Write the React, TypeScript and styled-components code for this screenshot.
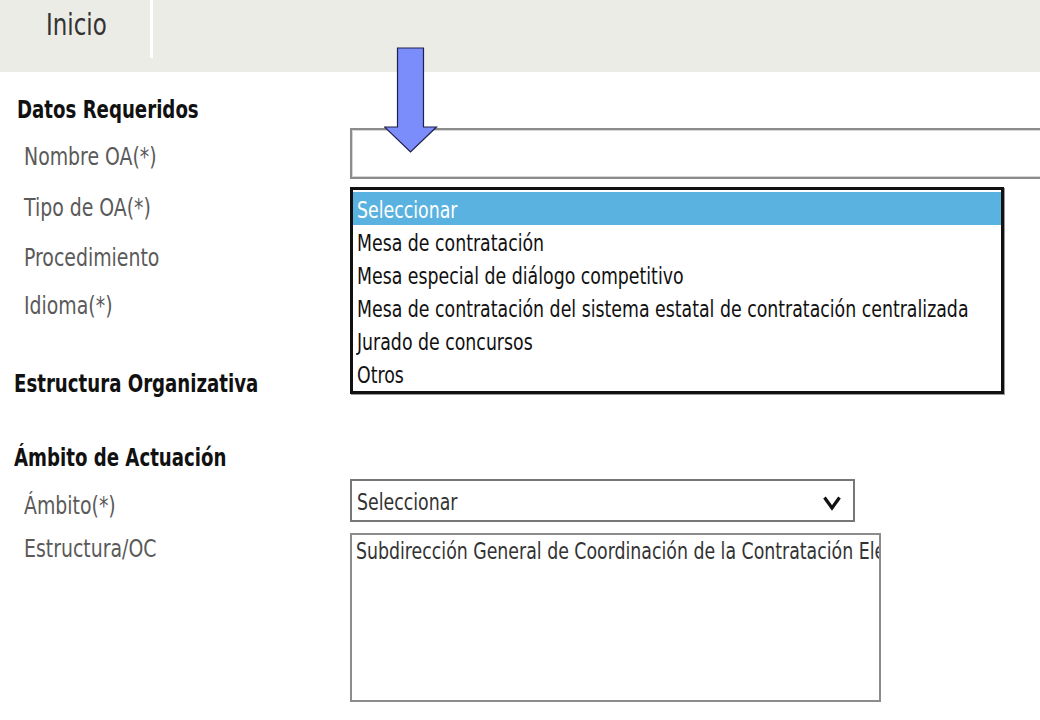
import React from 'react';
import styled, { createGlobalStyle } from 'styled-components';

const Global = createGlobalStyle`
  html, body { margin: 0; padding: 0; background: #fff; }
  body {
    font-family: "DejaVu Sans Condensed", "DejaVu Sans", sans-serif;
    font-stretch: condensed;
    overflow: hidden;
  }
  #root { width: 1040px; height: 720px; }
`;

const Page = styled.div`
  position: relative;
  width: 1040px;
  height: 720px;
  overflow: hidden;
  background: #fff;
`;

const TopBar = styled.nav`
  height: 72px;
  background: #ecece6;
  display: flex;
  align-items: flex-start;
`;

const Tab = styled.div`
  width: 104px;
  padding-left: 46px;
  border-right: 3px solid #ffffff;
  display: flex;
  align-items: center;
  padding-bottom: 10px;
  box-sizing: content-box;
  height: 48px;
`;

const TabLabel = styled.span`
  display: inline-block;
  font-size: 25.5px;
  line-height: 30px;
  color: #333;
  transform: scaleY(1.2);
`;

const Content = styled.main`
  padding-top: 23px;
  display: flex;
  flex-direction: column;
`;

const SectionTitle = styled.h2<{ $indent: number; $gap?: number }>`
  margin: ${(p) => p.$gap ?? 0}px 0 0 0;
  padding-left: ${(p) => p.$indent}px;
  height: 30px;
  line-height: 30px;
  font-size: 20.2px;
  font-weight: bold;
  color: #111;
  white-space: nowrap;
  transform: scaleY(1.2);
`;

const Row = styled.div<{ $h: number; $align?: string; $gap?: number }>`
  display: grid;
  grid-template-columns: 350px 1fr;
  height: ${(p) => p.$h}px;
  margin-top: ${(p) => p.$gap ?? 0}px;
  align-items: ${(p) => p.$align ?? 'center'};
`;

const Label = styled.label<{ $top?: number }>`
  display: block;
  padding-left: 24px;
  padding-top: ${(p) => p.$top ?? 0}px;
  font-size: 21px;
  line-height: 26px;
  color: #5a5a5a;
  white-space: nowrap;
  transform: scaleY(1.2);
`;

const Field = styled.div`
  position: relative;
  align-self: stretch;
  display: flex;
  align-items: center;
`;

const TextInput = styled.div`
  width: 720px;
  height: 51px;
  box-sizing: border-box;
  border: 2px solid #8c8c8c;
  box-shadow: inset 0 0 0 1px #d6d6d6;
  background: #fff;
`;

const ListBox = styled.ul`
  position: absolute;
  left: 0;
  top: 5px;
  width: 654px;
  box-sizing: border-box;
  margin: 0;
  padding: 2px 0 1px;
  list-style: none;
  border: 3px solid #111;
  background: #fff;
  box-shadow: 1px 1px 0 #999;
  z-index: 2;
`;

const Option = styled.li<{ $selected?: boolean }>`
  height: 33px;
  box-sizing: border-box;
  display: flex;
  align-items: center;
  padding: 4px 0 0 4px;
  background: ${(p) => (p.$selected ? '#59b2e0' : 'transparent')};
  color: ${(p) => (p.$selected ? '#ffffff' : '#111')};
`;

const OptionText = styled.span`
  display: inline-block;
  font-size: 19.3px;
  line-height: 24px;
  white-space: nowrap;
  transform: scaleY(1.22);
`;

const Select = styled.div`
  width: 505px;
  height: 43px;
  box-sizing: border-box;
  border: 2px solid #777;
  background: #fff;
  display: flex;
  align-items: center;
  justify-content: space-between;
  padding: 4px 11px 0 5px;
`;

const SelectText = styled.span`
  display: inline-block;
  font-size: 19.3px;
  line-height: 24px;
  color: #333;
  transform: scaleY(1.22);
`;

const TextArea = styled.div`
  width: 531px;
  height: 169px;
  box-sizing: border-box;
  border: 2px solid #8c8c8c;
  background: #fff;
  padding: 5px 4px;
  overflow: hidden;
`;

const AreaText = styled.div`
  font-size: 19.3px;
  line-height: 24px;
  color: #333;
  white-space: nowrap;
  transform: scaleY(1.22);
  transform-origin: left center;
`;

const Pointer = styled.svg`
  position: absolute;
  left: 384px;
  top: 47px;
  z-index: 3;
`;

const options = [
  'Seleccionar',
  'Mesa de contratación',
  'Mesa especial de diálogo competitivo',
  'Mesa de contratación del sistema estatal de contratación centralizada',
  'Jurado de concursos',
  'Otros',
];

export default function App() {
  return (
    <Page>
      <Global />
      <TopBar>
        <Tab>
          <TabLabel>Inicio</TabLabel>
        </Tab>
      </TopBar>
      <Content>
        <SectionTitle $indent={17}>Datos Requeridos</SectionTitle>
        <Row $h={57}>
          <Label $top={4}>Nombre OA(*)</Label>
          <Field>
            <TextInput />
          </Field>
        </Row>
        <Row $h={52}>
          <Label>Tipo de OA(*)</Label>
          <Field>
            <ListBox>
              {options.map((o, i) => (
                <Option key={o} $selected={i === 0}>
                  <OptionText>{o}</OptionText>
                </Option>
              ))}
            </ListBox>
          </Field>
        </Row>
        <Row $h={48}>
          <Label>Procedimiento</Label>
          <Field />
        </Row>
        <Row $h={48}>
          <Label>Idioma(*)</Label>
          <Field />
        </Row>
        <SectionTitle $indent={14} $gap={39}>Estructura Organizativa</SectionTitle>
        <SectionTitle $indent={14} $gap={44}>Ámbito de Actuación</SectionTitle>
        <Row $h={49} $gap={3}>
          <Label $top={8}>Ámbito(*)</Label>
          <Field>
            <Select>
              <SelectText>Seleccionar</SelectText>
              <svg width="20" height="16" viewBox="0 0 20 16">
                <polyline points="2.5,2.5 10,13 17.5,2.5" fill="none" stroke="#111" strokeWidth="3.2" />
              </svg>
            </Select>
          </Field>
        </Row>
        <Row $h={175} $gap={5} $align="start">
          <Label $top={5}>Estructura/OC</Label>
          <Field>
            <TextArea>
              <AreaText>Subdirección General de Coordinación de la Contratación Electrónica</AreaText>
            </TextArea>
          </Field>
        </Row>
      </Content>
      <Pointer width="54" height="106" viewBox="0 0 54 106">
        <polygon
          points="13.5,1 39.5,1 39.5,80 52.5,80 26.5,105 0.5,80 13.5,80"
          fill="#7b8cfb"
          stroke="#20204a"
          strokeWidth="1.2"
        />
      </Pointer>
    </Page>
  );
}
